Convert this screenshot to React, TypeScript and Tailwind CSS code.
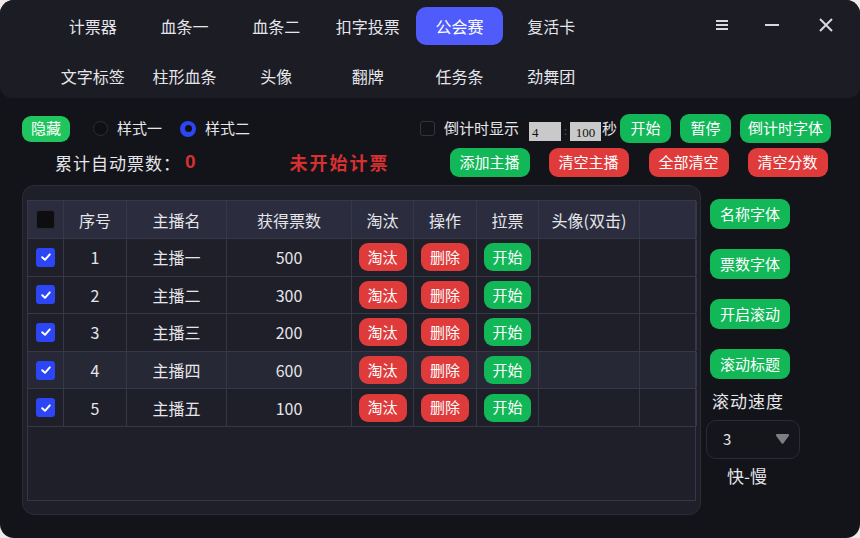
import React from 'react';

const font = { fontFamily: '"Noto Sans CJK SC", "Noto Sans", sans-serif' };

const tabsTop = ['计票器', '血条一', '血条二', '扣字投票', '公会赛', '复活卡'];
const tabsBottom = ['文字标签', '柱形血条', '头像', '翻牌', '任务条', '劲舞团'];

const rows = [
  { id: 1, name: '主播一', votes: 500 },
  { id: 2, name: '主播二', votes: 300 },
  { id: 3, name: '主播三', votes: 200 },
  { id: 4, name: '主播四', votes: 600 },
  { id: 5, name: '主播五', votes: 100 },
];

function Btn({ children, color, className = '' }: { children: React.ReactNode; color: 'green' | 'red'; className?: string }) {
  return (
    <div
      className={`flex items-center justify-center rounded-[9px] text-[15px] text-white ${
        color === 'green' ? 'bg-[#12b857]' : 'bg-[#e03b3b]'
      } ${className}`}
    >
      {children}
    </div>
  );
}

function Check() {
  return (
    <div className="flex h-[19px] w-[19px] items-center justify-center rounded-[3px] bg-[#2c45f5]">
      <svg width="12" height="12" viewBox="0 0 12 12">
        <path d="M2.2 6.2 L5 8.8 L9.8 3.4" stroke="#fff" strokeWidth="2" fill="none" strokeLinecap="round" strokeLinejoin="round" />
      </svg>
    </div>
  );
}

const cols = 'grid grid-cols-[36px_63px_100px_125px_62px_63px_62px_101px_57px]';
const cell = 'flex items-center justify-center border-r border-[#363848]';

export default function App() {
  return (
    <div className="h-[538px] w-[860px] bg-[#efe9ea]" style={font}>
      <div className="flex h-full w-full flex-col overflow-hidden rounded-[14px] bg-[#131419] text-[#e6e6ea]">
        {/* Header tabs */}
        <div className="relative h-[98px] shrink-0 rounded-b-[12px] bg-[#1b1c24] pl-[47px] pt-[7px]">
          <div className="grid w-[550px] grid-cols-6">
            {tabsTop.map((t) => (
              <div key={t} className="flex h-[38px] items-center justify-center">
                {t === '公会赛' ? (
                  <div className="flex h-[38px] w-[87px] items-center justify-center rounded-[10px] bg-[#4f5cfb] text-[16px] text-white">
                    {t}
                  </div>
                ) : (
                  <span className="text-[16px]">{t}</span>
                )}
              </div>
            ))}
          </div>
          <div className="mt-[13px] grid w-[550px] grid-cols-6">
            {tabsBottom.map((t) => (
              <div key={t} className="flex h-[36px] items-center justify-center text-[16px]">
                {t}
              </div>
            ))}
          </div>
          <div className="absolute right-[26px] top-[17px] flex items-center text-[#d8d8dc]">
            <svg width="14" height="14" viewBox="0 0 14 14">
              <rect x="1" y="2" width="12" height="2" fill="currentColor" />
              <rect x="1" y="6" width="12" height="2" fill="currentColor" />
              <rect x="1" y="10" width="12" height="2" fill="currentColor" />
            </svg>
            <svg className="ml-[35px]" width="16" height="16" viewBox="0 0 16 16">
              <rect x="1" y="7" width="14" height="2" fill="currentColor" />
            </svg>
            <svg className="ml-[38px]" width="16" height="16" viewBox="0 0 16 16">
              <path d="M2 2 L14 14 M14 2 L2 14" stroke="currentColor" strokeWidth="2" />
            </svg>
          </div>
        </div>

        {/* Controls row 1 */}
        <div className="mt-[16px] flex h-[29px] items-center pl-[22px]">
          <Btn color="green" className="h-[26px] w-[48px] rounded-[7px] !bg-[#20c65d]">
            隐藏
          </Btn>
          <div className="ml-[23px] h-[15px] w-[15px] rounded-full border border-[#2d2e36] bg-[#101014]" />
          <span className="ml-[9px] text-[15px]">样式一</span>
          <div className="ml-[18px] flex h-[16px] w-[16px] items-center justify-center rounded-full bg-[#2c45f5]">
            <div className="h-[7px] w-[7px] rounded-full bg-[#111]" />
          </div>
          <span className="ml-[9px] text-[15px]">样式二</span>
          <div className="ml-[170px] h-[15px] w-[15px] rounded-[3px] border border-[#33343d] bg-[#121217]" />
          <span className="ml-[9px] text-[15px]">倒计时显示</span>
          <div className="ml-[10px] mt-[6px] flex h-[19px] w-[32px] items-end bg-[#c9c9c9] pl-[3px] text-[13px] leading-[16px] text-[#111]" style={{ fontFamily: '"Liberation Serif", serif' }}>
            4
          </div>
          <span className="mx-[3px] mt-[4px] text-[11px] text-[#555]">:</span>
          <div className="mt-[6px] flex h-[19px] w-[31px] items-end justify-center bg-[#c9c9c9] text-[13px] leading-[16px] text-[#111]" style={{ fontFamily: '"Liberation Serif", serif' }}>
            100
          </div>
          <span className="ml-[1px] text-[15px]">秒</span>
          <Btn color="green" className="ml-[3px] h-[29px] w-[51px]">开始</Btn>
          <Btn color="green" className="ml-[9px] h-[29px] w-[51px]">暂停</Btn>
          <Btn color="green" className="ml-[9px] h-[29px] w-[91px]">倒计时字体</Btn>
        </div>

        {/* Controls row 2 */}
        <div className="mt-[5px] flex h-[29px] items-center">
          <span className="ml-[55px] text-[17px] tracking-[1px]">累计自动票数：</span>
          <span className="ml-[4px] text-[19px] font-bold text-[#d63030]" style={{ fontFamily: '"Liberation Sans", sans-serif' }}>0</span>
          <span className="ml-[94px] text-[18px] font-bold tracking-[2px] text-[#d63030]">未开始计票</span>
          <Btn color="green" className="ml-[60px] h-[29px] w-[80px]">添加主播</Btn>
          <Btn color="red" className="ml-[19px] h-[29px] w-[80px]">清空主播</Btn>
          <Btn color="red" className="ml-[20px] h-[29px] w-[80px]">全部清空</Btn>
          <Btn color="red" className="ml-[19px] h-[29px] w-[80px]">清空分数</Btn>
        </div>

        {/* Main */}
        <div className="mt-[8px] flex">
          <div className="ml-[22px] h-[330px] w-[679px] rounded-[12px] border border-[#2c2d39] bg-[#1e1f29] px-[4px] pt-[14px]">
            <div className="h-[301px] border border-[#363848] bg-[#1f1f29]">
              <div className={`${cols} h-[37px] bg-[#2b2d3e] text-[16px]`}>
                <div className={cell}>
                  <div className="h-[19px] w-[19px] rounded-[3px] border border-[#2a2a30] bg-[#0e0e11]" />
                </div>
                <div className={cell}>序号</div>
                <div className={cell}>主播名</div>
                <div className={cell}>获得票数</div>
                <div className={cell}>淘汰</div>
                <div className={cell}>操作</div>
                <div className={cell}>拉票</div>
                <div className={cell}>头像(双击)</div>
                <div className={cell} />
              </div>
              {rows.map((r) => (
                <div
                  key={r.id}
                  className={`${cols} h-[37.6px] border-t border-[#363848] text-[16px] ${r.id === 4 ? 'bg-[#262835]' : ''}`}
                >
                  <div className={cell}>
                    <Check />
                  </div>
                  <div className={cell}>{r.id}</div>
                  <div className={cell}>{r.name}</div>
                  <div className={cell}>{r.votes}</div>
                  <div className={cell}>
                    <Btn color="red" className="h-[28px] w-[48px]">淘汰</Btn>
                  </div>
                  <div className={cell}>
                    <Btn color="red" className="h-[28px] w-[48px]">删除</Btn>
                  </div>
                  <div className={cell}>
                    <Btn color="green" className="h-[28px] w-[47px]">开始</Btn>
                  </div>
                  <div className={cell} />
                  <div className={cell} />
                </div>
              ))}
              <div className="border-t border-[#363848]" />
            </div>
          </div>

          {/* Right column */}
          <div className="ml-[9px] flex flex-col items-start">
            <Btn color="green" className="mt-[14px] h-[30px] w-[80px]">名称字体</Btn>
            <Btn color="green" className="mt-[20px] h-[30px] w-[80px]">票数字体</Btn>
            <Btn color="green" className="mt-[20px] h-[30px] w-[80px]">开启滚动</Btn>
            <Btn color="green" className="mt-[20px] h-[30px] w-[80px]">滚动标题</Btn>
            <span className="ml-[2px] mt-[9px] text-[17px] tracking-[1px]">滚动速度</span>
            <div className="-ml-[4px] mt-[6px] flex h-[39px] w-[94px] items-center justify-between rounded-[10px] border border-[#2a2b35] bg-[#15161c] pl-[16px] pr-[9px]">
              <span className="text-[15px]">3</span>
              <svg width="15" height="11" viewBox="0 0 16 12">
                <path d="M1 2 Q0 0 2 0 L14 0 Q16 0 15 2 L9 10 Q8 11.5 7 10 Z" fill="#7d7e84" />
              </svg>
            </div>
            <span className="ml-[17px] mt-[4px] text-[17px]">快-慢</span>
          </div>
        </div>
      </div>
    </div>
  );
}
